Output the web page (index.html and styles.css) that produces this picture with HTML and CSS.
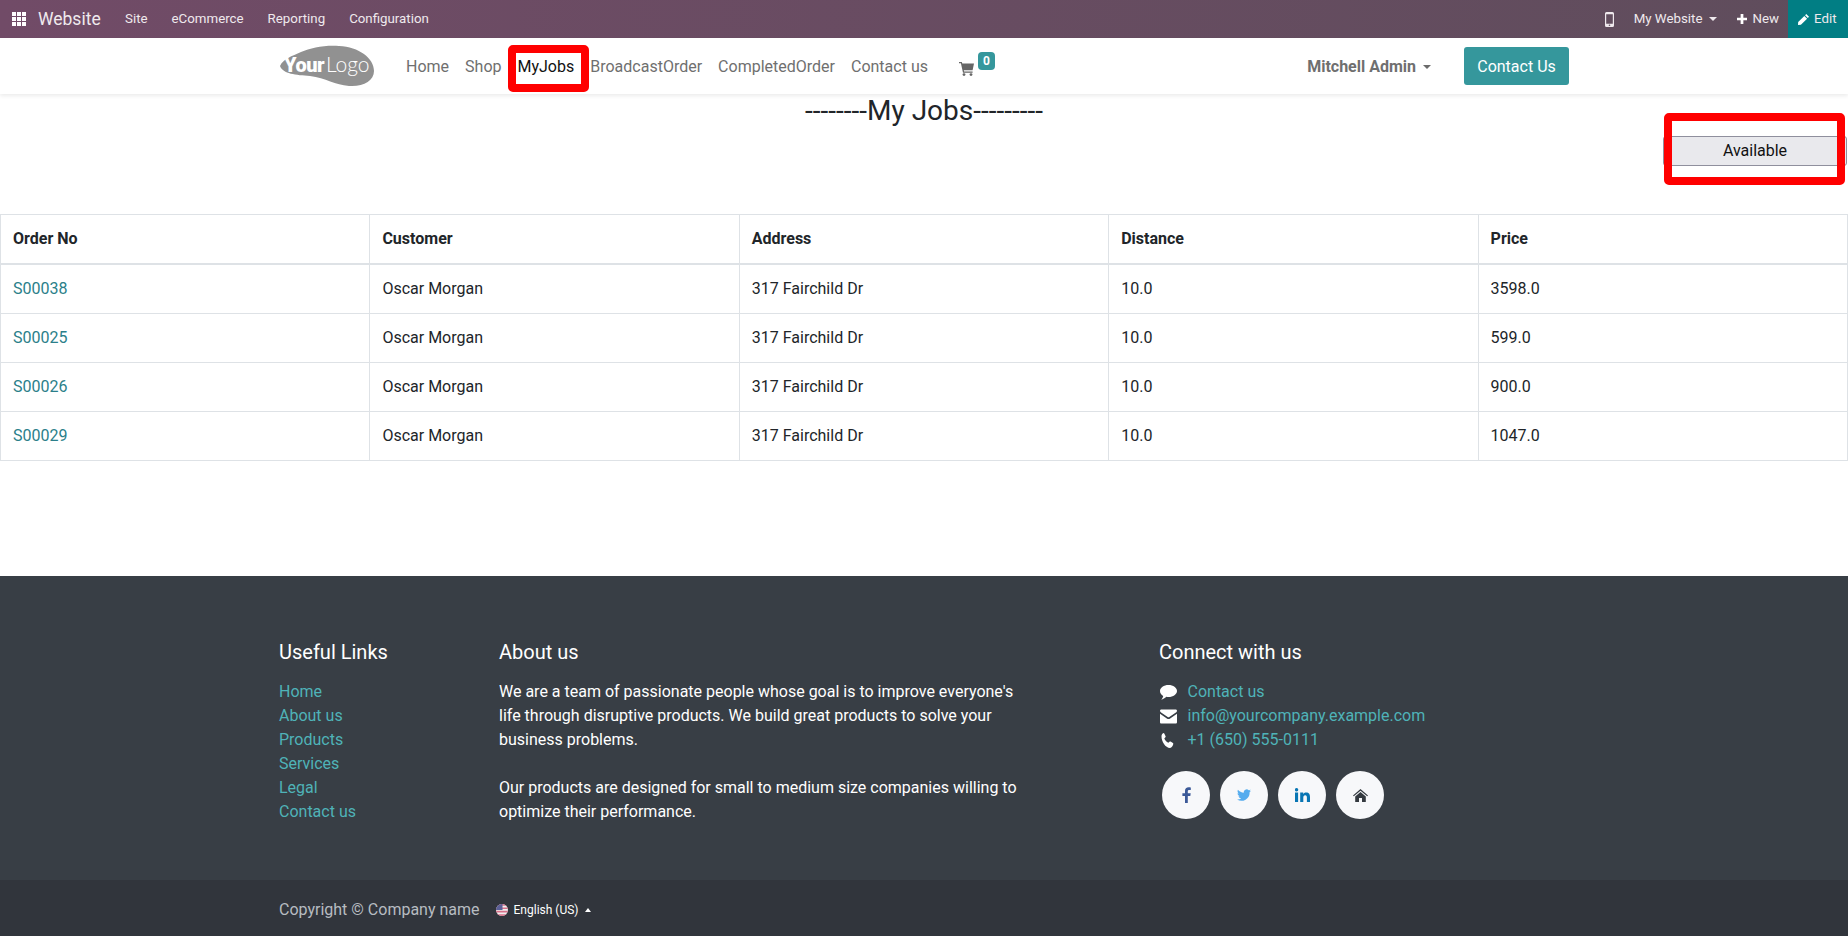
FILE: index.html
```html
<!DOCTYPE html>
<html lang="en">
<head>
  <meta charset="UTF-8" />
  <meta name="viewport" content="width=device-width, initial-scale=1.0" />
  <title>My Jobs</title>
  <link rel="stylesheet" href="styles.css">
</head>
<body>
  <!-- ADMIN BAR -->
  <div class="admin-bar">
    <svg class="apps-icon" viewBox="0 0 14 14"><path d="M0 0h4v4H0zM5 0h4v4H5zM10 0h4v4h-4zM0 5h4v4H0zM5 5h4v4H5zM10 5h4v4h-4zM0 10h4v4H0zM5 10h4v4H5zM10 10h4v4h-4z"/></svg>
    <span class="admin-brand">Website</span>
    <span class="admin-item">Site</span>
    <span class="admin-item">eCommerce</span>
    <span class="admin-item">Reporting</span>
    <span class="admin-item">Configuration</span>
    <div class="admin-right">
      <svg class="mobile-icon" viewBox="0 0 9 15"><path fill-rule="evenodd" d="M1.5 0h6A1.5 1.5 0 0 1 9 1.5v12A1.5 1.5 0 0 1 7.500 15h-6A1.500 1.500 0 0 1 0 13.500v-12A1.500 1.500 0 0 1 1.500 0zM1.200 2.200v9.600h6.600V2.200zM4.500 12.400a.8.8 0 1 0 0 1.600.8.8 0 0 0 0-1.600z"/></svg>
      <span class="admin-site">My Website</span>
      <span class="caret-down light"></span>
      <svg class="plus-icon" viewBox="0 0 11 11"><path d="M4 0h3v4h4v3H7v4H4V7H0V4h4z"/></svg>
      <span class="admin-new">New</span>
      <div class="admin-edit">
        <svg class="pencil-icon" viewBox="0 0 12 12"><path d="M9 0l3 3-1.300 1.300-3-3zM6.900 2.100l3 3L3.200 11.800 0 12l.2-3.200z"/></svg>
        <span>Edit</span>
      </div>
    </div>
  </div>

  <!-- NAVBAR -->
  <header class="navbar">
    <svg class="logo" viewBox="0 0 96 42">
      <path d="M1 21C4 14 13 11 22 7C32 3 45 0 60 1C80 2 95 13 95 26C95 36 84 42 70 41C56 40 47 33 31 31C17 30 4 29 1 21Z" fill="#919191"/>
      <text x="5" y="27" class="logo-your">Your</text>
      <text x="47" y="27" class="logo-logo">Logo</text>
    </svg>
    <nav class="nav-links">
      <a class="nav-link">Home</a>
      <a class="nav-link">Shop</a>
      <a class="nav-link active">MyJobs</a>
      <a class="nav-link">BroadcastOrder</a>
      <a class="nav-link">CompletedOrder</a>
      <a class="nav-link">Contact us</a>
      <span class="cart">
        <svg class="cart-icon" viewBox="0 0 15 14"><path d="M0 0h2.800l.5 1.600H15l-1.400 6.600H4.800l.3 1.400h8.500v1.200H4L1.900 1.200H0z"/><circle cx="5" cy="12.600" r="1.400"/><circle cx="12" cy="12.600" r="1.400"/></svg>
        <span class="cart-badge">0</span>
      </span>
    </nav>
    <div class="nav-user">Mitchell Admin <span class="caret-down"></span></div>
    <button class="contact-btn">Contact Us</button>
  </header>

  <!-- PAGE -->
  <main class="page">
    <h3 class="page-title">--------My Jobs---------</h3>
    <div class="status-row">
      <button class="status-btn">Available</button>
    </div>
    <table class="jobs">
      <thead>
        <tr><th>Order No</th><th>Customer</th><th>Address</th><th>Distance</th><th>Price</th></tr>
      </thead>
      <tbody>
        <tr><td><a>S00038</a></td><td>Oscar Morgan</td><td>317 Fairchild Dr</td><td>10.0</td><td>3598.0</td></tr>
        <tr><td><a>S00025</a></td><td>Oscar Morgan</td><td>317 Fairchild Dr</td><td>10.0</td><td>599.0</td></tr>
        <tr><td><a>S00026</a></td><td>Oscar Morgan</td><td>317 Fairchild Dr</td><td>10.0</td><td>900.0</td></tr>
        <tr><td><a>S00029</a></td><td>Oscar Morgan</td><td>317 Fairchild Dr</td><td>10.0</td><td>1047.0</td></tr>
      </tbody>
    </table>
  </main>

  <!-- FOOTER -->
  <footer class="footer">
    <div class="footer-cols">
      <div class="col-links">
        <h5>Useful Links</h5>
        <ul>
          <li><a>Home</a></li>
          <li><a>About us</a></li>
          <li><a>Products</a></li>
          <li><a>Services</a></li>
          <li><a>Legal</a></li>
          <li><a>Contact us</a></li>
        </ul>
      </div>
      <div class="col-about">
        <h5>About us</h5>
        <p>We are a team of passionate people whose goal is to improve everyone's life through disruptive products. We build great products to solve your business problems.</p>
        <p>Our products are designed for small to medium size companies willing to optimize their performance.</p>
      </div>
      <div class="col-connect">
        <h5>Connect with us</h5>
        <ul>
          <li>
            <svg class="contact-icon" viewBox="0 0 17 15"><path d="M8.500 0C13.200 0 17 2.700 17 6s-3.800 6-8.500 6c-.8 0-1.500-.1-2.200-.2C5 13.200 3 14.400 1.200 14.700c1-1 1.800-2.300 2-3.700C1.200 9.900 0 8.100 0 6 0 2.700 3.800 0 8.500 0z"/></svg>
            <a>Contact us</a>
          </li>
          <li>
            <svg class="contact-icon" viewBox="0 0 17 14"><path d="M1.300 0h14.400C16.400 0 17 .6 17 1.300c0 .8-.5 1.400-1.100 1.800L9.300 7.600a1.500 1.500 0 0 1-1.600 0L1.100 3.100C.5 2.700 0 2.100 0 1.300 0 .6.600 0 1.300 0zM0 4.300l7.200 4.900c.8.500 1.800.5 2.600 0L17 4.300v8.400c0 .7-.6 1.300-1.300 1.300H1.300C.6 14 0 13.400 0 12.700z"/></svg>
            <a>info@yourcompany.example.com</a>
          </li>
          <li>
            <svg class="contact-icon" viewBox="0 0 17 15"><path d="M3.500 0c.4 0 .7.300.9.700l1.200 2.500c.2.400.1.800-.2 1.100L4.300 5.400c.7 1.800 2.300 3.500 4 4.400l1.200-1.100c.3-.3.700-.3 1.100-.1l2.300 1.400c.4.200.5.600.4 1-.3 1.800-1.600 3.900-3.300 3.900C5.500 14.900 1.400 8.500 1.500 3.200 1.500 1.800 2.300.2 3.500 0z"/></svg>
            <a>+1 (650) 555-0111</a>
          </li>
        </ul>
        <div class="socials">
          <span class="social">
            <svg class="fb" viewBox="0 0 9 16"><path d="M5.800 16V9h2.500l.4-2.800H5.800V4.400c0-.8.300-1.400 1.400-1.400h1.600V.4C8.500.3 7.600.2 6.600.2 4.400.2 3 1.500 3 3.900v2.300H.4V9H3v7z"/></svg>
          </span>
          <span class="social">
            <svg class="tw" viewBox="0 0 16 13"><path d="M16 1.500c-.6.300-1.200.5-1.900.5.700-.4 1.200-1 1.400-1.800-.6.400-1.300.7-2.100.8A3.300 3.300 0 0 0 7.800 4C5.100 3.900 2.700 2.600 1.100.6.200 2.100.7 4 2.100 5c-.5 0-1-.2-1.500-.4 0 1.600 1.100 2.900 2.600 3.300-.5.100-1 .1-1.500 0 .4 1.300 1.600 2.200 3.100 2.300A6.600 6.600 0 0 1 0 11.500 9.300 9.300 0 0 0 14.400 3.200c.6-.4 1.200-1 1.600-1.700z"/></svg>
          </span>
          <span class="social">
            <svg class="in" viewBox="0 0 15 14"><path d="M0 4.600h3.100V14H0zM1.600 0a1.700 1.700 0 1 1 0 3.400 1.700 1.700 0 0 1 0-3.400zM5.200 4.600h3v1.300c.5-.9 1.500-1.500 2.900-1.500 3 0 3.900 1.900 3.900 4.700V14h-3.100V9.600c0-1.300-.3-2.400-1.700-2.400s-1.900 1-1.900 2.400V14H5.200z"/></svg>
          </span>
          <span class="social">
            <svg class="home" viewBox="0 0 15 13"><path d="M7.500 0l7.500 6.400-.8.900L7.500 1.700.8 7.300 0 6.400zM7.500 3l5.300 4.400V13H9V9H6v4H2.200V7.400z"/></svg>
          </span>
        </div>
      </div>
    </div>
    <div class="copyright">
      <div class="copyright-inner">
        <span>Copyright © Company name</span>
        <svg class="flag" viewBox="0 0 12 12">
          <defs><clipPath id="flagClip"><circle cx="6" cy="6" r="6"/></clipPath></defs>
          <g clip-path="url(#flagClip)">
            <rect width="12" height="12" fill="#f0f0f0"/>
            <path d="M0 0h12v1.700H0zM0 3.400h12v1.700H0zM0 6.800h12v1.700H0zM0 10.200h12V12H0z" fill="#d8708a"/>
            <rect width="6.500" height="6" fill="#5a5f96"/>
          </g>
        </svg>
        <span class="lang">English (US)</span>
        <span class="caret-up"></span>
      </div>
    </div>
  </footer>

  <!-- RED HIGHLIGHTS DRAWN ON THE SCREENSHOT -->
  <div class="mark mark-nav"></div>
  <div class="mark mark-status"></div>
</body>
</html>
```

FILE: styles.css
```css
* {
  box-sizing: border-box;
}

body {
  margin: 0;
  background-color: white;
  color: #212529;
  font-family: 'Roboto', 'Liberation Sans', sans-serif;
  font-size: 16px;
  line-height: 24px;
  height: 936px;
  overflow: hidden;
  position: relative;
}

/* admin bar */
.admin-bar {
  height: 38px;
  display: flex;
  align-items: center;
  background: linear-gradient(90deg, #714b67, #5f4d5c);
  color: #efe9ed;
  font-size: 13.300px;
  padding-left: 12px;
}
.apps-icon {
  width: 14px;
  height: 14px;
  fill: white;
}
.admin-brand {
  font-size: 17.500px;
  margin-left: 12px;
  margin-right: 12px;
  width: 63px;
}
.admin-item {
  padding: 0 12px;
}
.admin-right {
  margin-left: auto;
  display: flex;
  align-items: center;
  height: 38px;
}
.mobile-icon {
  width: 9px;
  height: 15px;
  fill: #efe9ed;
  margin-right: 20px;
}
.admin-site {
  margin-right: 7px;
}
.caret-down {
  display: inline-block;
  border-top: 4px solid #6b6b6b;
  border-left: 4px solid transparent;
  border-right: 4px solid transparent;
  vertical-align: 3px;
  margin-left: 3px;
}
.caret-down.light {
  border-top-color: #efe9ed;
  margin-left: 0;
  margin-right: 20px;
}
.plus-icon {
  width: 10px;
  height: 10px;
  fill: white;
  margin-right: 5px;
}
.admin-new {
  margin-right: 9px;
}
.admin-edit {
  width: 60px;
  height: 38px;
  background-color: #017e84;
  display: flex;
  align-items: center;
  padding-left: 10px;
  gap: 5px;
}
.pencil-icon {
  width: 11px;
  height: 11px;
  fill: white;
}

/* navbar */
.navbar {
  height: 56px;
  display: flex;
  align-items: center;
  padding-left: 279px;
  background-color: white;
  box-shadow: 0 2px 4px rgba(0, 0, 0, 0.08);
  position: relative;
}
.logo {
  width: 96px;
  height: 42px;
  flex: none;
}
.logo-your {
  font-family: 'Roboto', sans-serif;
  font-weight: 900;
  font-size: 20px;
  fill: white;
  letter-spacing: -0.5px;
}
.logo-logo {
  font-family: 'Lato', sans-serif;
  font-weight: 300;
  font-size: 21px;
  fill: white;
}
.nav-links {
  display: flex;
  align-items: center;
  margin-left: 23px;
  padding-top: 1px;
}
.nav-link {
  padding: 0 8px;
  color: #6f6f6f;
}
.nav-link.active {
  color: #111;
}
.cart {
  display: flex;
  align-items: flex-start;
  margin-left: 23px;
}
.cart-icon {
  width: 15px;
  height: 14px;
  fill: #666;
  margin-top: 5px;
}
.cart-badge {
  width: 17px;
  height: 18px;
  margin-left: 4px;
  margin-top: -5px;
  border-radius: 4px;
  background-color: #35979c;
  color: white;
  font-size: 12px;
  font-weight: 700;
  line-height: 18px;
  text-align: center;
}
.nav-user {
  margin-left: auto;
  font-weight: 700;
  color: #6f6f6f;
  margin-right: 33px;
  padding-top: 1px;
}
.contact-btn {
  width: 105px;
  height: 38px;
  margin-right: 279px;
  background-color: #35979c;
  color: white;
  border: none;
  border-radius: 3px;
  font-family: inherit;
  font-size: 16px;
}

/* page */
.page {
  height: 482px;
}
.page-title {
  margin: 0;
  height: 32px;
  font-size: 28px;
  font-weight: 400;
  line-height: 33px;
  text-align: center;
}
.status-row {
  display: flex;
  justify-content: flex-end;
  padding: 10px 1px 0 0;
}
.status-btn {
  width: 184px;
  height: 30px;
  padding-bottom: 3px;
  background-color: #e9e9ed;
  border: 1px solid #8f8f9d;
  border-radius: 3px;
  color: #111;
  font-family: inherit;
  font-size: 16px;
}
.jobs {
  width: 100%;
  margin-top: 48px;
  border-collapse: collapse;
  table-layout: fixed;
}
.jobs th,
.jobs td {
  border: 1px solid #dee2e6;
  padding: 12px;
  text-align: left;
}
.jobs th {
  font-weight: 700;
  border-bottom-width: 2px;
}
.jobs a {
  color: #2b7f8a;
}

/* footer */
.footer {
  height: 360px;
  display: flex;
  flex-direction: column;
  background-color: #383e45;
  color: white;
}
.footer-cols {
  flex: 1;
  display: flex;
  padding: 64px 0 0 279px;
}
.footer h5 {
  margin: 0 0 16px;
  font-size: 20px;
  font-weight: 400;
  line-height: 24px;
}
.footer ul {
  margin: 0;
  padding: 0;
  list-style: none;
}
.footer a {
  color: #4fb3b8;
}
.col-links {
  width: 220px;
}
.col-about {
  width: 660px;
}
.col-about p {
  width: 520px;
  margin: 0 0 24px;
}
.col-connect li {
  display: flex;
  align-items: center;
  gap: 10.500px;
}
.contact-icon {
  width: 17px;
  height: 15px;
  fill: white;
  margin-left: 1px;
}
.socials {
  display: flex;
  gap: 10px;
  margin-top: 19px;
  margin-left: 3px;
}
.social {
  width: 48px;
  height: 48px;
  border-radius: 50%;
  background-color: #f7f8fa;
  display: flex;
  align-items: center;
  justify-content: center;
}
.fb {
  width: 9px;
  height: 16px;
  fill: #3b5998;
}
.tw {
  width: 14px;
  height: 12px;
  fill: #55acee;
}
.in {
  width: 15px;
  height: 14px;
  fill: #0976b4;
}
.home {
  width: 15px;
  height: 13px;
  fill: #343a40;
}
.copyright {
  height: 56px;
  padding-top: 3px;
  background-color: #31353c;
  color: #b7bcc1;
  display: flex;
  align-items: center;
  padding-left: 279px;
}
.copyright-inner {
  display: flex;
  align-items: center;
}
.flag {
  width: 12px;
  height: 12px;
  margin-left: 16px;
}
.lang {
  margin-left: 6px;
  font-size: 12px;
  color: white;
}
.caret-up {
  margin-left: 6px;
  border-bottom: 4px solid white;
  border-left: 3px solid transparent;
  border-right: 3px solid transparent;
}

/* red marks */
.mark {
  position: absolute;
  border: 8px solid #ff0000;
  border-radius: 5px;
}
.mark-nav {
  left: 508px;
  top: 45px;
  width: 81px;
  height: 47px;
}
.mark-status {
  left: 1664px;
  top: 113px;
  width: 181px;
  height: 72px;
}
```
